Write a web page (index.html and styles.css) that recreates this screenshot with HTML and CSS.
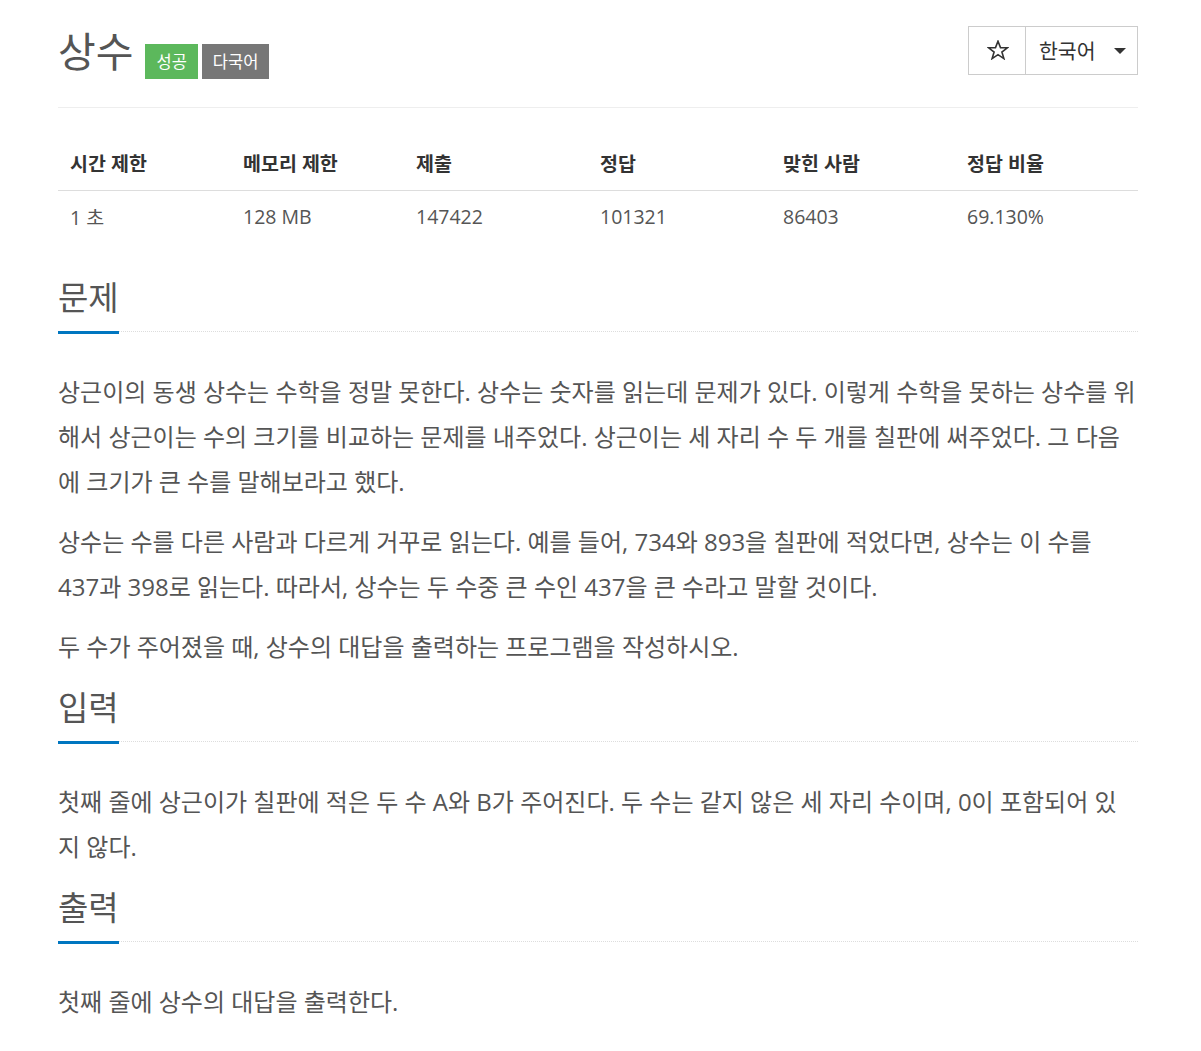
FILE: index.html
```html
<!DOCTYPE html>
<html lang="ko">
<head>
<meta charset="utf-8">
<title>상수</title>
<link rel="stylesheet" href="styles.css">
</head>
<body>
<div class="container">
  <header class="page-header">
    <div class="title-wrap">
      <h1 class="title">상수</h1>
      <span class="label label-success">성공</span>
      <span class="label label-default">다국어</span>
    </div>
    <div class="btn-group">
      <button class="btn btn-star" type="button" aria-label="즐겨찾기">
        <svg width="22" height="20" viewBox="0 0 22 20"><polygon points="11,1.2 13.5,7.6 20.3,7.8 14.9,12 16.9,18.6 11,14.7 5.1,18.6 7.1,12 1.7,7.8 8.5,7.6" fill="none" stroke="#333" stroke-width="1.6" stroke-linejoin="miter"/></svg>
      </button>
      <button class="btn btn-lang" type="button">한국어<span class="caret"></span></button>
    </div>
  </header>

  <table class="info-table">
    <thead>
      <tr>
        <th class="c1">시간 제한</th>
        <th class="c2">메모리 제한</th>
        <th class="c3">제출</th>
        <th class="c4">정답</th>
        <th class="c5">맞힌 사람</th>
        <th class="c6">정답 비율</th>
      </tr>
    </thead>
    <tbody>
      <tr>
        <td>1 초</td>
        <td>128 MB</td>
        <td>147422</td>
        <td>101321</td>
        <td>86403</td>
        <td>69.130%</td>
      </tr>
    </tbody>
  </table>

  <section class="problem-section first">
    <div class="headline"><h2>문제</h2></div>
    <div class="problem-text">
      <p>상근이의 동생 상수는 수학을 정말 못한다. 상수는 숫자를 읽는데 문제가 있다. 이렇게 수학을 못하는 상수를 위해서 상근이는 수의 크기를 비교하는 문제를 내주었다. 상근이는 세 자리 수 두 개를 칠판에 써주었다. 그 다음에 크기가 큰 수를 말해보라고 했다.</p>
      <p>상수는 수를 다른 사람과 다르게 거꾸로 읽는다. 예를 들어, 734와 893을 칠판에 적었다면, 상수는 이 수를 437과 398로 읽는다. 따라서, 상수는 두 수중 큰 수인 437을 큰 수라고 말할 것이다.</p>
      <p>두 수가 주어졌을 때, 상수의 대답을 출력하는 프로그램을 작성하시오.</p>
    </div>
  </section>

  <section class="problem-section">
    <div class="headline"><h2>입력</h2></div>
    <div class="problem-text">
      <p>첫째 줄에 상근이가 칠판에 적은 두 수 A와 B가 주어진다. 두 수는 같지 않은 세 자리 수이며, 0이 포함되어 있지 않다.</p>
    </div>
  </section>

  <section class="problem-section">
    <div class="headline"><h2>출력</h2></div>
    <div class="problem-text">
      <p>첫째 줄에 상수의 대답을 출력한다.</p>
    </div>
  </section>
</div>
</body>
</html>
```

FILE: styles.css
```css
html, body {
  margin: 0;
  padding: 0;
  background: #fff;
}

body {
  font-family: "Open Sans", "Noto Sans CJK KR", sans-serif;
  color: #555;
  font-size: 16px;
}

.container {
  width: 1080px;
  margin: 0 0 0 58px;
}

.page-header {
  display: flex;
  justify-content: space-between;
  align-items: flex-start;
  padding-top: 26px;
  padding-bottom: 28px;
  border-bottom: 1px solid #eee;
}

.title-wrap {
  display: flex;
  align-items: flex-start;
  padding-top: 3px;
}

.title {
  margin: 0;
  font-size: 41px;
  line-height: 44px;
  font-weight: 400;
  color: #555;
}

.label {
  display: inline-block;
  margin-top: 15px;
  height: 35px;
  line-height: 35px;
  padding: 0 11px;
  color: #fff;
  font-size: 16.5px;
  font-weight: 400;
}

.label-success {
  background: #5cb85c;
  margin-left: 12px;
}

.label-default {
  background: #777;
  margin-left: 4px;
}

.btn-group {
  display: flex;
  border: 1px solid #ccc;
  height: 47px;
}

.btn {
  background: #fff;
  border: 0;
  margin: 0;
  font-family: inherit;
  color: #333;
  display: flex;
  align-items: center;
  cursor: pointer;
}

.btn-star {
  width: 57px;
  justify-content: center;
  padding: 0 0 2px 1px;
  border-right: 1px solid #ccc;
}

.btn-lang {
  width: 111px;
  padding: 0 0 2px 13px;
  font-size: 20.5px;
}

.caret {
  display: inline-block;
  width: 0;
  height: 0;
  margin-left: 18px;
  margin-top: 3px;
  border-top: 6px solid #333;
  border-left: 6px solid transparent;
  border-right: 6px solid transparent;
}

.info-table {
  width: 1080px;
  border-collapse: collapse;
  margin-top: 32px;
  table-layout: fixed;
}

.info-table th,
.info-table td {
  text-align: left;
  padding: 0 12px;
  font-size: 19.5px;
}

.info-table th {
  height: 50px;
  padding-bottom: 4px;
  font-weight: 700;
  color: #333;
  border-bottom: 1px solid #ddd;
  box-sizing: border-box;
}

.info-table td {
  height: 52px;
  color: #555;
}

.c1 { width: 173px; }
.c2 { width: 173px; }
.c3 { width: 184px; }
.c4 { width: 183px; }
.c5 { width: 184px; }
.c6 { width: 183px; }

.problem-section {
  margin-top: 21px;
}

.problem-section.first {
  margin-top: 37px;
}

.headline {
  display: flex;
  border-bottom: 1px dotted #ddd;
}

.headline h2 {
  margin: 0 0 -3px 0;
  font-size: 33px;
  line-height: 36px;
  font-weight: 400;
  color: #555;
  padding-bottom: 15px;
  border-bottom: 3px solid #0076c0;
}

.problem-text {
  padding-top: 37px;
}

.problem-text p {
  margin: 0 0 15px 0;
  font-size: 24px;
  line-height: 45px;
  color: #555;
}

.problem-text p:last-child {
  margin-bottom: 0;
}
```
